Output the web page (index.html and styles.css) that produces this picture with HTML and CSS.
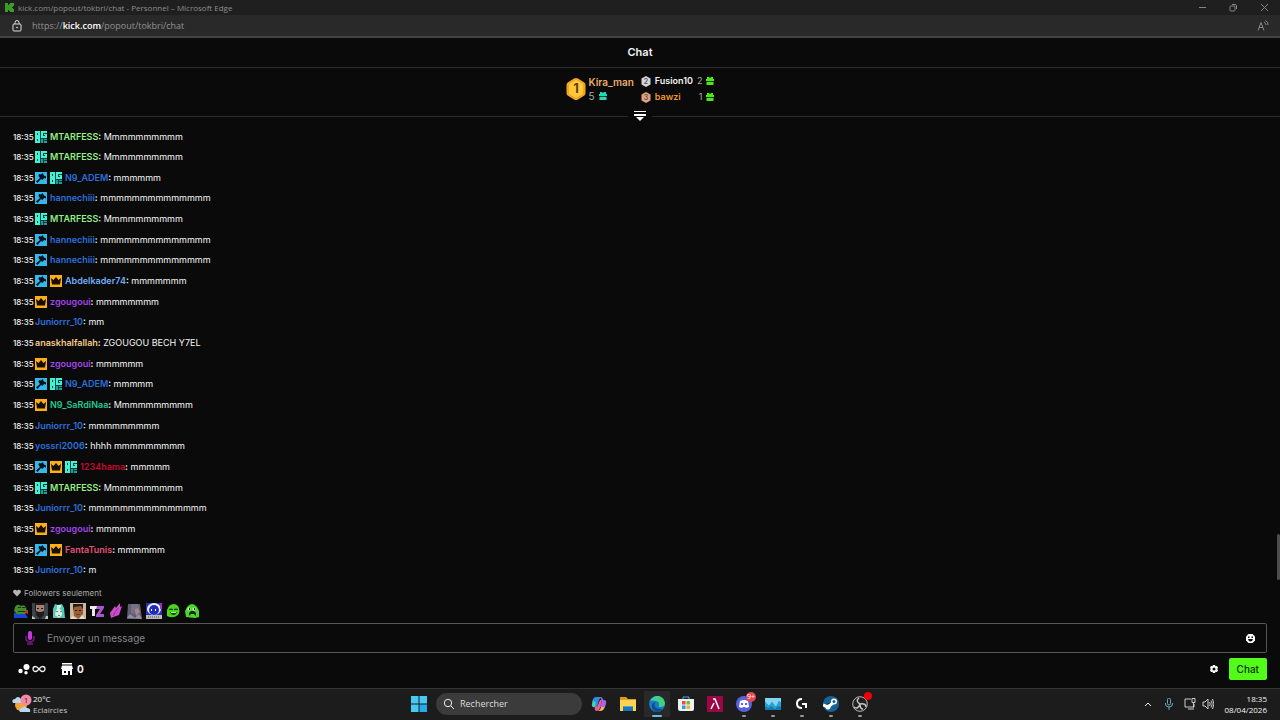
FILE: index.html
```html
<!DOCTYPE html>
<html lang="fr">
<head>
<meta charset="utf-8">
<title>kick.com/popout/tokbri/chat</title>
<link rel="stylesheet" href="styles.css">
</head>
<body>
<svg class="sprite" aria-hidden="true">
  <symbol id="og" viewBox="0 0 12 12"><rect width="12" height="12" fill="#0d3f3f"/><path fill="#3df5d5" fill-rule="evenodd" d="M0 0h5v6H0zM2 2v2h1V2zM0 6h5v6H0zM2 8v2h1V8zM6 0h6v2H8v3h2V4H9V3h3v4H6z"/><path fill="#249b98" d="M6 8h2v4H6zM9 8h3v1H9zM9 10h3v2H9z"/></symbol>
  <symbol id="mod" viewBox="0 0 12 12"><rect width="12" height="12" fill="#2fb9ec"/><path fill="#071018" d="M4 2l2 .5L7.500 1 9 3.500l2 1v2L9 6 7.500 8 6 7l-3.500 4L1 9.500 5 6 3.500 4z"/></symbol>
  <symbol id="vip" viewBox="0 0 12 12"><rect width="12" height="12" fill="#fcb015"/><path fill="#160e00" d="m1 3 2.500 2L6 2l2.500 3L11 3l-1 6.500H2z"/></symbol>
  <symbol id="gift" viewBox="0 0 8 8"><path fill="currentColor" d="M1 0h2l1 1 1-1h2v2h1v2H0V2h1zM.5 4.700h7V8h-7z"/></symbol>
</svg>

<header class="titlebar">
  <svg class="kick" viewBox="0 0 9 9"><path fill="#3a9d25" d="M0 0h3v2h1V1h1V0h4v3H8v1H7v1h1v1h1v3H5V8H4V7H3v2H0z"/></svg>
  <span class="window-title">kick.com/popout/tokbri/chat - Personnel – Microsoft Edge</span>
  <div class="window-buttons">
    <button aria-label="Réduire"><svg viewBox="0 0 9 9"><path d="M1 4.500h7"/></svg></button>
    <button aria-label="Restaurer"><svg viewBox="0 0 9 9"><rect x="1" y="3" width="5" height="5" rx="1"/><path d="M3 1.500h3q1.500 0 1.500 1.500v3"/></svg></button>
    <button aria-label="Fermer"><svg viewBox="0 0 9 9"><path d="m1 1 7 7M8 1 1 8"/></svg></button>
  </div>
</header>
<div class="addressbar">
  <svg class="lock" viewBox="0 0 10 12"><rect x="1" y="4" width="8" height="7" rx="1"/><path d="M3 4V2.500a2 2 0 0 1 4 0V4"/><circle cx="5" cy="7.500" r=".5"/></svg>
  <span class="url">https://<b>kick.com</b>/popout/tokbri/chat</span>
  <svg class="read" viewBox="0 0 12 12"><path d="m1 10.500 3-8 3 8M2 7.500h4M7 2q2 1 2 3M8.500.500Q11.500 2 11 5"/></svg>
</div>

<main class="chat">
  <h1 class="chat-title">Chat</h1>
  <section class="leaders">
    <div class="first">
      <svg class="hex-large" viewBox="0 0 20 22"><path fill="#f5a51c" d="M10 0q1 0 2 .6l6 3.600q1.500 1 1.500 2.500v8.600q0 1.500-1.500 2.500l-6 3.600q-2 1.200-4 0l-6-3.600Q.5 16.800.5 15.300V6.700q0-1.500 1.500-2.500L8 .6Q9 0 10 0"/><path fill="#ffc83d" d="m10 2 7 4v10l-7 4-7-4V6z"/><text x="10" y="15" text-anchor="middle" class="rank-one">1</text></svg>
      <div><b class="c-sand">Kira_man</b><span class="score">5 <svg class="gift teal"><use href="#gift"/></svg></span></div>
    </div>
    <div class="others">
      <svg class="hex" viewBox="0 0 10 11"><path fill="#d5d5d8" d="m5 0 4.500 2.500v6L5 11 .5 8.500v-6z"/><text x="5" y="8" text-anchor="middle">2</text></svg><b>Fusion10</b><span class="count">2</span><svg class="gift green"><use href="#gift"/></svg>
      <svg class="hex" viewBox="0 0 10 11"><path fill="#e3a27c" d="m5 0 4.500 2.500v6L5 11 .5 8.500v-6z"/><text x="5" y="8" text-anchor="middle">3</text></svg><b class="c-orange">bawzi</b><span class="count">1</span><svg class="gift green"><use href="#gift"/></svg>
    </div>
  </section>
  <div class="divider"><button aria-label="Afficher le classement"><svg viewBox="0 0 12 10"><path fill="#fff" d="M0 0h12v1H0zM0 3h12v2H0zM2 6h8L6 10z"/></svg></button></div>

  <ul class="messages">
    <li><time>18:35</time><svg><use href="#og"/></svg><p><b class="c-lime">MTARFESS</b><b>:</b> Mmmmmmmmmm</p></li>
    <li><time>18:35</time><svg><use href="#og"/></svg><p><b class="c-lime">MTARFESS</b><b>:</b> Mmmmmmmmmm</p></li>
    <li><time>18:35</time><svg><use href="#mod"/></svg><svg><use href="#og"/></svg><p><b class="c-blue">N9_ADEM</b><b>:</b> mmmmmm</p></li>
    <li><time>18:35</time><svg><use href="#mod"/></svg><p><b class="c-blue">hannechiii</b><b>:</b> mmmmmmmmmmmmmm</p></li>
    <li><time>18:35</time><svg><use href="#og"/></svg><p><b class="c-lime">MTARFESS</b><b>:</b> Mmmmmmmmmm</p></li>
    <li><time>18:35</time><svg><use href="#mod"/></svg><p><b class="c-blue">hannechiii</b><b>:</b> mmmmmmmmmmmmmm</p></li>
    <li><time>18:35</time><svg><use href="#mod"/></svg><p><b class="c-blue">hannechiii</b><b>:</b> mmmmmmmmmmmmmm</p></li>
    <li><time>18:35</time><svg><use href="#mod"/></svg><svg><use href="#vip"/></svg><p><b class="c-sky">Abdelkader74</b><b>:</b> mmmmmmm</p></li>
    <li><time>18:35</time><svg><use href="#vip"/></svg><p><b class="c-purple">zgougoui</b><b>:</b> mmmmmmmm</p></li>
    <li><time>18:35</time><p><b class="c-blue">Juniorrr_10</b><b>:</b> mm</p></li>
    <li><time>18:35</time><p><b class="c-cream">anaskhalfallah</b><b>:</b> ZGOUGOU BECH Y7EL</p></li>
    <li><time>18:35</time><svg><use href="#vip"/></svg><p><b class="c-purple">zgougoui</b><b>:</b> mmmmmm</p></li>
    <li><time>18:35</time><svg><use href="#mod"/></svg><svg><use href="#og"/></svg><p><b class="c-blue">N9_ADEM</b><b>:</b> mmmmm</p></li>
    <li><time>18:35</time><svg><use href="#vip"/></svg><p><b class="c-green">N9_SaRdiNaa</b><b>:</b> Mmmmmmmmmm</p></li>
    <li><time>18:35</time><p><b class="c-blue">Juniorrr_10</b><b>:</b> mmmmmmmmm</p></li>
    <li><time>18:35</time><p><b class="c-blue">yossri2006</b><b>:</b> hhhh mmmmmmmmm</p></li>
    <li><time>18:35</time><svg><use href="#mod"/></svg><svg><use href="#vip"/></svg><svg><use href="#og"/></svg><p><b class="c-red">1234hama</b><b>:</b> mmmmm</p></li>
    <li><time>18:35</time><svg><use href="#og"/></svg><p><b class="c-lime">MTARFESS</b><b>:</b> Mmmmmmmmmm</p></li>
    <li><time>18:35</time><p><b class="c-blue">Juniorrr_10</b><b>:</b> mmmmmmmmmmmmmmm</p></li>
    <li><time>18:35</time><svg><use href="#vip"/></svg><p><b class="c-purple">zgougoui</b><b>:</b> mmmmm</p></li>
    <li><time>18:35</time><svg><use href="#mod"/></svg><svg><use href="#vip"/></svg><p><b class="c-pink">FantaTunis</b><b>:</b> mmmmmm</p></li>
    <li><time>18:35</time><p><b class="c-blue">Juniorrr_10</b><b>:</b> m</p></li>
  </ul>
  <div class="scroll-thumb"></div>

  <form class="composer">
    <label class="mode" for="message"><svg viewBox="0 0 8 8"><path fill="#b5b5b5" d="M4 7.500.600 4Q-.6 2 1 1q1.700-1 3 .7Q5.300 0 7 1q1.600 1 .4 3z"/></svg>Followers seulement</label>
    <div class="emotes">
      <svg viewBox="0 0 16 16"><path fill="#1546cf" d="M1 10h11l3 5H1z"/><path fill="#468c2b" d="M2 4q2-4 6-1 4-2 5 2l1 3-2 3H4L1 8z"/><path fill="#182f15" d="M5 4h3v1H5zM9 4h3v1H9zM5 8h7v1H5z"/><path fill="#df2330" d="m12 8 3-1v4l-3-1z"/></svg>
      <svg viewBox="0 0 16 16"><path fill="#39474b" d="M0 0h16v16H0z"/><path fill="#a97e70" d="M4 2q4-3 8 0v8l-4 5-4-4z"/><path fill="#21191a" d="M3 0h10v2H4v7H3zM5 5h2v1H5zM9 5h2v1H9zM4 8l3 1h2l3-1v4l-4 4-4-4z"/><path fill="#c8c8c4" d="M0 13l3 2v1H0zM14 13h2v3h-3z"/></svg>
      <svg viewBox="0 0 16 16"><path fill="#57c9ba" d="M2 6 4 1l3 1 4-1 2 4 1 10H2z"/><path fill="#e5e8dc" d="m5 7 3-2 3 3v4l-3 3-4-3z"/><path fill="#349b94" d="M5 8h2v1H5zM9 8h2v1H9zM7 12h2v1H7z"/><path fill="#c5f3e4" d="M6 2h4v2L6 7z"/></svg>
      <svg viewBox="0 0 16 16"><path fill="#c9b8a0" d="M0 0h16v16H0z"/><path fill="#9c5d35" d="M3 4q5-6 10 0v7l-4 5-5-3z"/><path fill="#241b16" d="M3 1h10v5l-2-3-7 1-1 4zM5 7h2v1H5zM9 7h2v1H9z"/><path fill="#e1dfd3" d="m2 13 5 3H1zM12 12l3 4H9z"/><path fill="#673b24" d="M6 11h4v1H6z"/></svg>
      <svg viewBox="0 0 16 16"><path fill="#eee5f1" d="M1 3h8v3H6v7H3V6H1z"/><path fill="#a957cd" d="M8 3h7v2l-4 6h4v3H7v-2l4-6H7z"/></svg>
      <svg viewBox="0 0 16 16"><path fill="#cc4dc8" d="m3 15-1-5 5-7 1 2 4-5v4l2-1-3 9-3 1z"/><path stroke="#8d3296" d="m6 11 4-6M5 13l2-3"/></svg>
      <svg viewBox="0 0 16 16"><path fill="#625e72" d="M1 1h12l2 15H0z"/><path fill="#a78687" d="m7 5 4-1 2 5-4 4z"/><path fill="#777187" d="M4 1h7l1 4-4 1-1 5-3-1z"/><path fill="#9190a2" d="M0 15l3-4 5 4 4-4 3 5z"/></svg>
      <svg viewBox="0 0 16 16"><path fill="#2830c0" d="M0 0h16v16H0z"/><ellipse cx="8" cy="6" rx="7" ry="6" fill="#eef0ff"/><ellipse cx="8" cy="7" rx="5" ry="5" fill="#202cbf"/><path fill="#fff" d="M5 6h1v2H5zM9 6h1v2H9z"/><path fill="#bababa" d="M0 12h16v4H0z"/><path stroke="#555" stroke-dasharray="1 1" d="M2 14h12"/><path fill="#a72ac2" d="M14 0h2v6h-2z"/></svg>
      <svg viewBox="0 0 16 16"><path fill="#49d51d" d="M4 3q5-4 9 0 3 5 0 9-5 4-11 1V7z"/><path fill="#173d10" d="M4 6q2-1 4 0v1H4zM9 6q2-1 4 0v1H9zM5 9h7q-1 3-3 3-3 0-4-3"/><path fill="#b9e89c" d="M6 9h5v1H6z"/></svg>
      <svg viewBox="0 0 16 16"><path fill="#4bd52a" d="M3 4q5-6 10 0l2 4v6l-4 1-9-1-1-6z"/><circle cx="5" cy="6" r="1.500" fill="#dfffdc"/><circle cx="10" cy="6" r="1.500" fill="#dfffdc"/><path fill="#102c0c" d="M5 5h1v2H5zM10 5h1v2h-1zM5 13v-3l2-2h3l2 2v3l-2-2H7z"/></svg>
    </div>
    <div class="message-box">
      <svg class="voice" viewBox="0 0 10 14"><path fill="none" stroke="#79148d" stroke-width="1.500" d="M1 5v2q0 4 4 4t4-4V5M5 11v2M2 13h6"/><rect x="3" width="4" height="9" rx="2" fill="#c43bdd"/></svg>
      <input id="message" type="text" placeholder="Envoyer un message">
      <button type="button" class="smiley" aria-label="Emotes"><svg viewBox="0 0 9 9"><path fill="#fff" d="M2.500 0h4L9 2.500v4L6.500 9h-4L0 6.500v-4z"/><path fill="#0b0b0b" d="M2 2.500h1.500V4H2zM5.500 2.500H7V4H5.500zM2 5h5Q6.500 7.500 4.500 7.500T2 5"/></svg></button>
    </div>
    <div class="tools">
      <svg class="bubbles" viewBox="0 0 12 12" fill="#fff"><circle cx="8.500" cy="4" r="3"/><circle cx="2.500" cy="8" r="2.200"/><circle cx="8" cy="9.800" r="1.700"/></svg>
      <svg class="infinity" viewBox="0 0 14 8"><path d="M7 4Q5 1.500 3.500 1.500a2.500 2.500 0 0 0 0 5Q5 6.500 7 4t3.500-2.500a2.500 2.500 0 0 1 0 5Q9 6.500 7 4"/></svg>
      <svg class="shop" viewBox="0 0 12 12"><path fill="#fff" fill-rule="evenodd" d="M1 0h10v1.500H1zM1 2.500h10L12 6h-1v6H9V8H7v4H1V6H0zM3 8v2h2V8z"/></svg>
      <b class="points">0</b>
      <button type="button" class="settings" aria-label="Paramètres"><svg viewBox="0 0 10 10"><path fill="#fff" fill-rule="evenodd" d="M4 1h2l.5 1.200L8 2l1 1.700L8.200 5 9 6.300 8 8l-1.500-.2L6 9H4l-.5-1.200L2 8 1 6.300 1.800 5 1 3.700 2 2l1.500.2zM5 3.500a1.500 1.500 0 1 0 0 3 1.500 1.500 0 0 0 0-3"/></svg></button>
      <button type="submit" class="send">Chat</button>
    </div>
  </form>
</main>

<footer class="taskbar">
  <div class="weather">
    <svg viewBox="0 0 20 20"><circle cx="9" cy="11" r="6" fill="#f4a33b"/><path fill="#bad8ef" d="M1 9q-2-4 2-4 3-4 6 0 3 3-1 4zM8 18q-2-4 2-4 2-3 5 0 4 0 3 4z"/><circle cx="14" cy="6" r="5.500" fill="#f38ca3"/><text x="14" y="9" text-anchor="middle">1</text></svg>
    <div><span>20°C</span><span class="dim">Eclaircies</span></div>
  </div>
  <nav class="apps">
    <button aria-label="Démarrer"><svg viewBox="0 0 16 16" fill="#48c9f5"><path d="M0 0h7.500v7.500H0zM8.500 0H16v7.500H8.500zM0 8.500h7.500V16H0z"/><path fill="#24a9eb" d="M8.500 8.500H16V16H8.500z"/></svg></button>
    <label class="search"><svg viewBox="0 0 12 12"><circle cx="5" cy="5" r="3.700"/><path d="m8 8 3 3"/></svg><input type="text" aria-label="Rechercher" placeholder="Rechercher"></label>
    <button aria-label="Copilot"><svg viewBox="0 0 16 16"><path fill="#278ee6" d="M5 1h5L8 4 6 11H3Q0 11 1 7l1-4q1-2 3-2"/><path fill="#53c8a4" d="m2 4-1 5q0 3 3 2l1-4z"/><path fill="#a764ed" d="M9 1q3 0 3 3h1q3 0 2 4l-1 3H9l2-6z"/><path fill="#f05b91" d="M6 15q-3 0-2-4h2l3-7h2l-2 8q-1 3-3 3"/><path fill="#f6b34c" d="M6 15h4q3-1 4-4h-4q-1 4-4 4"/></svg></button>
    <button aria-label="Explorateur"><svg viewBox="0 0 16 16"><path fill="#d99b20" d="M0 1h6l2 2h8v12H0z"/><path fill="#ffd351" d="M0 4h16v11H0z"/><path fill="#1877b5" d="M3 10h10v5H3z"/><path fill="#41a9dd" d="M3 10h10v1H3z"/></svg></button>
    <button class="running active" aria-label="Edge"><svg viewBox="0 0 16 16"><circle cx="8" cy="8" r="8" fill="#167ac8"/><path fill="#43d17e" d="M1 5q3-5 8-5 6 1 7 7 0 4-5 4-2 0-1-2 1-3-3-4-4-1-6 0"/><path fill="#42c4df" d="M1 5q3-5 8-5l2 .5Q3 2 1 5"/><path fill="#124a8b" d="M6 6q-3 7 6 7h2q-3 3-6 3-6-2-5-7 0-2 3-3"/></svg></button>
    <button aria-label="Microsoft Store"><svg viewBox="0 0 16 16"><path fill="none" stroke="#46aee8" d="M5 4V1h6v3"/><path fill="#edf1f4" d="M0 3h16v10q0 2-2 2H2q-2 0-2-2z"/><path fill="#e65035" d="M4 5h3.500v3.500H4z"/><path fill="#7db73a" d="M8.500 5H12v3.500H8.500z"/><path fill="#27a0df" d="M4 9.500h3.500V13H4z"/><path fill="#efb72c" d="M8.500 9.500H12V13H8.500z"/></svg></button>
    <button aria-label="Application"><svg viewBox="0 0 16 16"><path fill="#9d0646" d="M0 0h16v16H0z"/><path fill="none" stroke="#fff" stroke-width="1.500" d="M6 3h2l4 10M7 7l-3 6"/></svg></button>
    <button class="running" aria-label="Discord"><svg viewBox="0 0 16 16"><circle cx="8" cy="8" r="8" fill="#5963df"/><path fill="#fff" d="m4 5 3-1h2l3 1 1 6-3 1-1-1H7l-1 1-3-1z"/><path fill="#5963df" d="M5 7h2v2H5zM9 7h2v2H9z"/></svg><span class="badge">9+</span></button>
    <button class="running" aria-label="Moniteur"><svg viewBox="0 0 16 16"><path fill="#137bb2" d="M0 2h16v12H0z"/><path fill="#83d3f3" d="M0 2h16v5l-2-2-3 6-4-5-3 4-4-4z"/><path fill="#26a3d5" d="M0 6l4 4 3-4 4 5 3-6 2 2v4l-3-1-3 3-4-3-3 2-3-2z"/></svg></button>
    <button class="running" aria-label="Logitech G"><svg viewBox="0 0 16 16"><path fill="none" stroke="#fff" stroke-width="2" d="M8 3Q3 3 3 7.500T8 12M8 8h4v4"/></svg></button>
    <button class="running" aria-label="Steam"><svg viewBox="0 0 16 16"><circle cx="8" cy="8" r="8" fill="#176197"/><path stroke="#fff" stroke-width="3" d="m0 9 5 2 6-5"/><circle cx="11" cy="5.500" r="3" fill="#fff"/><circle cx="11" cy="5.500" r="1.500" fill="#176197"/><circle cx="5" cy="11" r="2.500" fill="#fff"/></svg></button>
    <button class="running" aria-label="OBS"><svg viewBox="0 0 16 16"><circle cx="8" cy="8" r="7.300" fill="#202020" stroke="#bbb"/><path fill="none" stroke="#c5c5c5" stroke-width="1.500" d="M7 2q-4 3 1 6 6-1 6 3M8 8q-2 6-6 3M8 8q0 5 3 5"/></svg><span class="badge record"></span></button>
  </nav>
  <div class="tray">
    <svg viewBox="0 0 12 12"><path stroke="#eee" d="m3 8 3-3 3 3"/></svg>
    <svg class="tray-mic" viewBox="0 0 12 12"><rect x="4.500" y="0" width="3" height="7" rx="1.500" stroke="#68a4b9"/><path stroke="#68a4b9" d="M2.500 5v1q0 3 3.500 3t3.500-3V5M6 9v3"/></svg>
    <svg viewBox="0 0 12 12"><path stroke="#ccc" d="M7 1H1v8h9V6M4 11h6M8 .500h3v4H8zM9.500 4.500v5"/></svg>
    <svg viewBox="0 0 12 12"><path stroke="#ccc" d="M1 4h2l3-3v10L3 8H1zM7.500 4q1.500 2 0 4M9 2.500q2.500 3.500 0 7M10.500 1q3 5 0 10"/></svg>
    <div class="clock"><time>18:35</time><time>08/04/2026</time></div>
  </div>
</footer>
</body>
</html>
```
FILE: styles.css
```css
* { box-sizing: border-box; }
body { margin: 0; min-height: 100vh; display: flex; flex-direction: column; background: #0a0a0a; color: #f4f4f4; font: 9px/12px Inter, "Liberation Sans", sans-serif; }
svg { display: block; flex: none; }
button { border: 0; padding: 0; background: none; color: inherit; font: inherit; }
input { border: 0; outline: 0; background: none; color: inherit; font: inherit; min-width: 0; }
.sprite { position: absolute; width: 0; height: 0; }

.titlebar { display: flex; align-items: center; gap: 4px; height: 15px; padding: 0 11px 0 5px; background: #1f1f1f; color: #8d8d8d; font-family: "Open Sans", sans-serif; font-size: 8px; }
.kick { width: 9px; height: 9px; }
.window-buttons { display: flex; gap: 22px; margin-left: auto; }
.window-buttons svg { width: 9px; height: 9px; fill: none; stroke: #858585; }
.addressbar { display: flex; align-items: center; height: 23px; padding: 0 11px 0 12px; background: #292929; border-bottom: 2px solid #444; color: #929292; font-family: "Open Sans", sans-serif; font-size: 9px; }
.addressbar b { color: #fff; font-weight: 600; }
.lock { width: 10px; height: 12px; margin-right: 10px; fill: none; stroke: #ddd; }
.read { width: 12px; height: 12px; margin-left: auto; fill: none; stroke: #888; }

.chat { flex: 1; display: flex; flex-direction: column; position: relative; }
.chat-title { margin: 0; height: 30px; border-bottom: 1px solid #2b2b2b; text-align: center; font-size: 11px; line-height: 28px; font-weight: 600; }
.leaders { display: flex; justify-content: center; align-items: center; gap: 7px; height: 42px; }
.leaders b { font-weight: 600; }
.first { display: flex; align-items: center; gap: 3px; }
.first b, .score { display: block; font-size: 10px; line-height: 14px; }
.hex-large { width: 20px; height: 22px; }
.rank-one { font: 700 13px Inter, sans-serif; fill: #674000; }
.score { display: flex; align-items: center; gap: 4px; color: #aaa; }
.others { display: grid; grid-template-columns: 10px auto auto 8px; column-gap: 4px; row-gap: 4px; align-items: center; }
.hex { width: 10px; height: 11px; }
.hex text { font: 600 7px Inter, sans-serif; fill: #575757; }
.count { color: #aaa; text-align: right; }
.gift { width: 8px; height: 8px; }
.teal { color: #22d9b6; }
.green { color: #4ce51e; }
.divider { display: flex; align-items: center; gap: 6px; height: 12px; }
.divider::before, .divider::after { content: ""; flex: 1; height: 1px; background: #2b2b2b; }
.divider svg { width: 12px; height: 10px; }

.messages { flex: 1; display: flex; flex-direction: column; justify-content: space-between; margin: 0; padding: 8px 13px 10px; list-style: none; }
.messages li { display: flex; align-items: center; gap: 3px; height: 13px; }
.messages svg { width: 12px; height: 12px; }
.messages time { width: 19px; font-size: 8px; font-weight: 500; }
.messages p { margin: 0; }
.messages b { font-weight: 600; }
.c-lime { color: #93ef83; }
.c-blue { color: #2b6fdc; }
.c-sky { color: #72aef7; }
.c-purple { color: #a245ec; }
.c-cream { color: #f7c98b; }
.c-green { color: #21c991; }
.c-red { color: #c9062d; }
.c-pink { color: #e85279; }
.c-sand { color: #e9ac69; }
.c-orange { color: #ef9629; }
.scroll-thumb { position: absolute; right: 0; top: 496px; width: 3px; height: 46px; border-radius: 2px; background: #4d4d4d; }

.composer { padding: 0 13px 8px; }
.mode { display: flex; align-items: center; gap: 3px; color: #aaa; font-size: 8px; }
.mode svg { width: 8px; height: 8px; }
.emotes { display: flex; gap: 3px; height: 16px; margin: 4px 0; }
.emotes svg { width: 16px; height: 16px; }
.message-box { display: flex; align-items: center; height: 30px; padding: 0 11px; border: 1px solid #555; border-radius: 2px; }
.voice { width: 10px; height: 14px; margin-right: 10px; }
.message-box input { flex: 1; font-size: 10px; }
.message-box input::placeholder { color: #83878b; opacity: 1; }
.smiley svg { width: 9px; height: 9px; }
.tools { display: flex; align-items: center; height: 22px; margin-top: 5px; padding-left: 5px; }
.bubbles { width: 12px; height: 12px; margin-right: 2px; }
.infinity { width: 14px; height: 8px; fill: none; stroke: #eee; stroke-width: 1.3; }
.shop { width: 12px; height: 12px; margin: 0 4px 0 15px; }
.points { font-size: 10px; }
.settings { margin-left: auto; margin-right: 10px; }
.settings svg { width: 10px; height: 10px; }
.send { height: 22px; padding: 0 8px; border-radius: 2px; background: #53fc18; color: #102b0a; font-size: 10px; font-weight: 500; }

.taskbar { display: grid; grid-template-columns: 1fr auto 1fr; align-items: center; height: 32px; padding: 0 13px 2px 12px; border-top: 1px solid #343434; background: #1c1c1c; font-family: "Open Sans", sans-serif; font-size: 8px; line-height: 11px; }
.weather, .tray { display: flex; align-items: center; }
.weather { gap: 1px; }
.weather > svg { width: 20px; height: 20px; }
.weather text { font: 8px "Open Sans", sans-serif; fill: #3b1f28; }
.weather span, .clock time { display: block; }
.dim { color: #c5c5c5; }
.apps { display: flex; align-items: center; gap: 13px; }
.apps button { position: relative; }
.apps button svg { width: 16px; height: 16px; }
.search { display: flex; align-items: center; gap: 5px; width: 146px; height: 22px; margin: 0 -4px; padding: 0 7px; border-radius: 11px; background: #3b3b3b; }
.search svg { width: 12px; height: 12px; fill: none; stroke: #eee; }
.search input { flex: 1; font-size: 9px; padding: 0; }
.search input::placeholder { color: #ddd; opacity: 1; }
.running::after { content: ""; position: absolute; left: 6px; bottom: -5px; width: 4px; height: 2px; border-radius: 1px; background: #999; }
.active { background: #292929; box-shadow: 0 0 0 5px #292929; }
.active::after { left: 3px; width: 10px; background: #58c5ee; }
.badge { position: absolute; right: -4px; top: -4px; width: 10px; height: 10px; border-radius: 5px; background: #e34650; color: #fff; font-size: 7px; line-height: 10px; text-align: center; }
.record { width: 8px; height: 8px; background: #f00008; }
.tray { justify-content: flex-end; gap: 6px; }
.tray svg { width: 12px; height: 12px; fill: none; }
.tray-mic { margin: 0 3px; }
.clock { margin-left: 5px; text-align: right; }
```
